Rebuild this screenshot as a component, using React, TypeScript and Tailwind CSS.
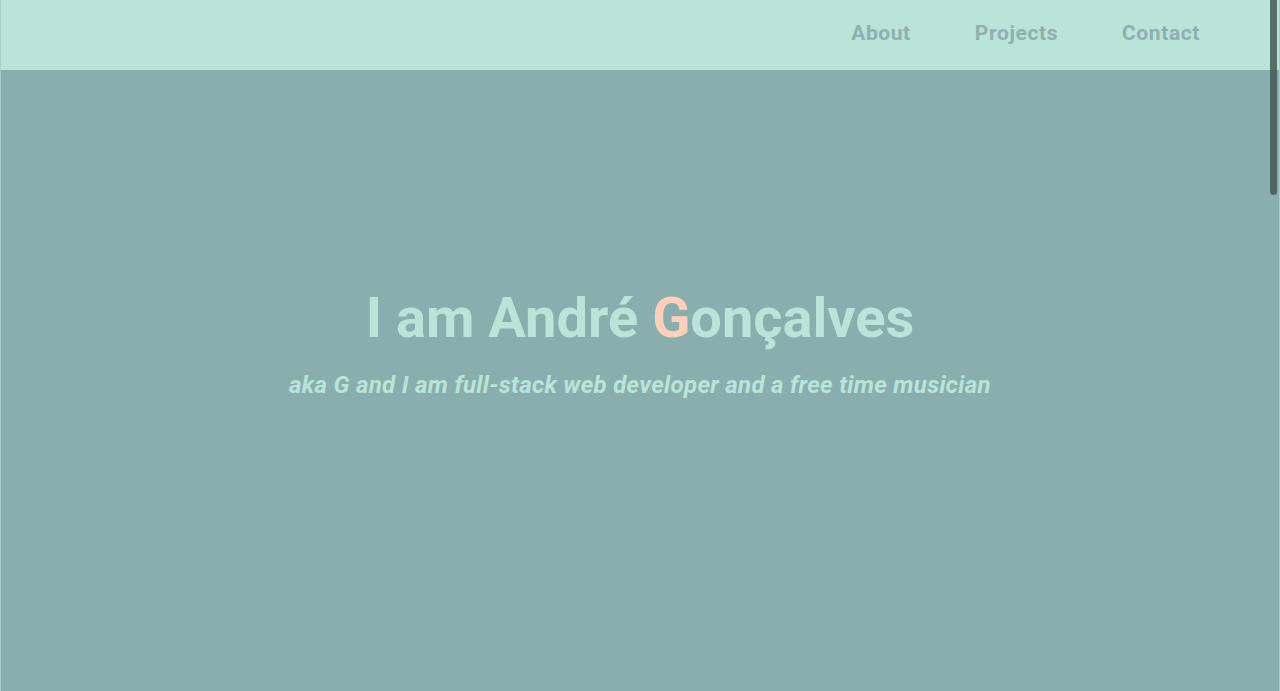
export default function App() {
  return (
    <div className="relative h-[691px] overflow-hidden border-x border-[#a9cdc8] bg-[#88afad] font-['Roboto',sans-serif]">
      <header className="flex h-[70px] items-center justify-end bg-[#bae3da] pb-[2px] pr-[79px]">
        <nav className="flex gap-[64px] text-[21px] font-bold tracking-[0.6px] text-[#8cb1ae]">
          <a href="#about">About</a>
          <a href="#projects">Projects</a>
          <a href="#contact">Contact</a>
        </nav>
      </header>

      <main className="flex flex-col items-center pt-[214px] text-[#bae3da]">
        <h1 className="text-[56px] font-bold leading-[68px]">
          I am André <span className="text-[#ffcfb9]">G</span>onçalves
        </h1>
        <p className="mt-[17px] text-[24px] font-bold italic leading-[32px] tracking-[0.3px]">
          aka G and I am full-stack web developer and a free time musician
        </p>
      </main>

      {/* overlay scrollbar thumb */}
      <div className="absolute right-[2px] top-0 h-[195px] w-[7px] rounded-b-full bg-[#4a5e5b]/90" />
    </div>
  );
}
